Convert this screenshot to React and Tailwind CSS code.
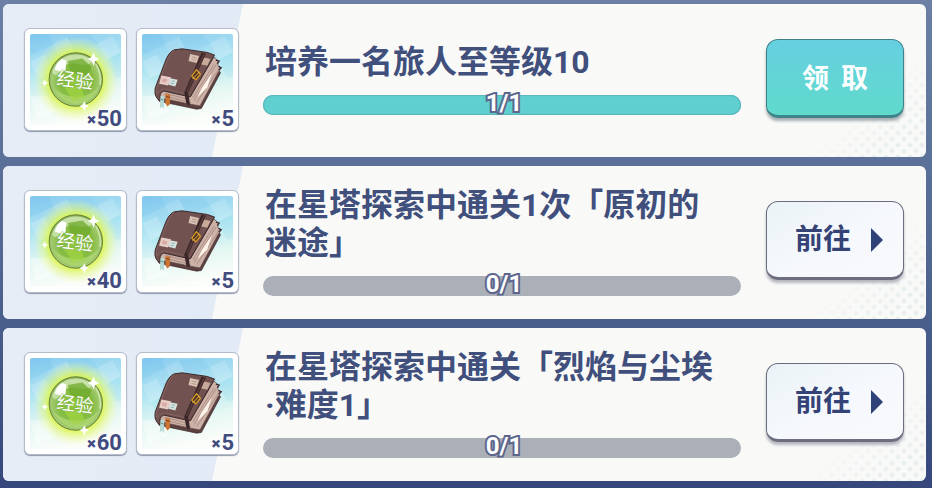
import React from 'react'

const tasks = [
    { id: 1, title: ['培养一名旅人至等级10'], exp: 50, books: 5, done: 1, total: 1 },
    { id: 2, title: ['在星塔探索中通关1次「原初的', '迷途」'], exp: 40, books: 5, done: 0, total: 1 },
    { id: 3, title: ['在星塔探索中通关「烈焰与尘埃', '·难度1」'], exp: 60, books: 5, done: 0, total: 1 },
]

function TileSky({ id, x, y }) {
    return (
        <g>
            <defs>
                <linearGradient id={id} x1="0.1" y1="0" x2="0.3" y2="1">
                    <stop offset="0" stopColor="#8accef" />
                    <stop offset="0.4" stopColor="#b2e6f3" />
                    <stop offset="0.72" stopColor="#e4f7f2" />
                    <stop offset="1" stopColor="#fbfdfa" />
                </linearGradient>
            </defs>
            <g transform={`translate(${x} ${y})`}>
                <rect width="276" height="276" fill={`url(#${id})`} />
                <path d="M0 84 L44 62 L70 112 L26 134Z" fill="#fff" opacity="0.18" />
                <path d="M70 30 L112 8 L140 62 L96 84Z" fill="#fff" opacity="0.12" />
                <path d="M112 8 L180 0 L206 28 L140 62Z" fill="#4fb4e8" opacity="0.1" />
                <path d="M206 28 L250 6 L276 56 L232 78Z" fill="#fff" opacity="0.16" />
                <path d="M0 0 L60 0 L70 30 L0 66Z" fill="#4fb4e8" opacity="0.14" />
                <path d="M26 134 L70 112 L96 164 L52 186Z" fill="#8fe5e5" opacity="0.2" />
                <path d="M232 78 L276 56 L276 130 L258 132Z" fill="#6bcdec" opacity="0.14" />
                <path d="M0 190 L52 186 L80 236 L20 260Z" fill="#fff" opacity="0.4" />
            </g>
        </g>
    )
}

function ExpOrb({ id }) {
    return (
        <svg viewBox="45 42 276 276" className="block size-full" aria-hidden="true">
            <TileSky id={`${id}-sky`} x={45} y={42} />
            <defs>
                <radialGradient id={`${id}-glow`}>
                    <stop offset="0.6" stopColor="#dcf53c" stopOpacity="0.95" />
                    <stop offset="0.74" stopColor="#e2f766" stopOpacity="0.6" />
                    <stop offset="1" stopColor="#effcae" stopOpacity="0" />
                </radialGradient>
                <radialGradient id={`${id}-ball`} cx="0.5" cy="0.52" r="0.52">
                    <stop offset="0" stopColor="#8fc83c" />
                    <stop offset="0.6" stopColor="#84bb42" />
                    <stop offset="0.88" stopColor="#a3cb70" />
                    <stop offset="1" stopColor="#7da556" />
                </radialGradient>
            </defs>
            <circle cx="184" cy="180" r="130" fill={`url(#${id}-glow)`} />
            <circle cx="184" cy="180" r="81" fill={`url(#${id}-ball)`} stroke="#66823f" strokeWidth="3" />
            <path d="M112 158 A76 76 0 0 1 236 124 Q222 142 186 132 Q150 126 134 158 Q122 176 112 158Z" fill="#d7ebbf" opacity="0.7" />
            <path d="M160 124 L204 116 L232 142 L220 166 L168 160Z" fill="#6faa2e" opacity="0.75" />
            <path d="M116 206 Q140 250 184 254 Q232 252 252 204 Q222 234 184 232 Q146 232 116 206Z" fill="#b7dd7c" opacity="0.6" />
            <path d="M150 204 L196 198 L212 232 L176 246Z" fill="#a6d842" opacity="0.6" />
            <path d="M244 132 Q262 160 258 196" fill="none" stroke="#d9efb3" strokeWidth="5" opacity="0.8" />
            <path d="M120 150 Q126 126 142 118 L155 122 L153 152 Q138 160 120 150Z" fill="#fff" />
            <text
                x="182"
                y="202"
                textAnchor="middle"
                transform="rotate(7 182 180)"
                fontSize="56"
                fontWeight="400"
                fill="#fff"
                stroke="#76aa48"
                strokeWidth="2"
                paintOrder="stroke"
            >
                经验
            </text>
            <path d="M238 98 L243 112 L255 118 L243 124 L238 138 L232 124 L220 118 L232 112Z" fill="#fff" />
            <path d="M210 246 L214 256 L224 261 L214 266 L210 277 L205 266 L195 261 L205 256Z" fill="#fff" />
            <path d="M90 180 L93 187 L100 190 L93 194 L90 201 L86 194 L80 190 L86 187Z" fill="#fff" />
        </svg>
    )
}

function Book({ id }) {
    return (
        <svg viewBox="38 42 276 276" className="block size-full" aria-hidden="true">
            <TileSky id={`${id}-sky`} x={38} y={42} />
            {/* back cover */}
            <path d="M258 128 L276 160 L218 268 L204 270 L90 246 L78 222Z" fill="#5b403f" stroke="#3a2829" strokeWidth="2" strokeLinejoin="round" />
            {/* pages */}
            <path d="M256 112 L270 124 L268 138 L278 146 L268 160 L214 260 L180 254 L96 236 L88 218 L104 212 L186 230Z" fill="#cdb2a8" stroke="#5a4140" strokeWidth="2" />
            <path d="M262 136 L196 244 M270 150 L204 250 M256 134 L192 236" stroke="#9c7c74" strokeWidth="2" fill="none" />
            <path d="M250 160 L218 208 L206 234 L236 204Z" fill="#fff4ea" />
            <path d="M108 222 L184 242 M106 230 L186 250" stroke="#9b786c" strokeWidth="2" />
            {/* spine and cover */}
            <path d="M136 90 Q118 96 106 132 L78 206 Q74 232 90 243 L94 240 Q88 222 104 215 L184 233 L258 106 L236 98 L160 87Z" fill="#715250" stroke="#3b2829" strokeWidth="3" strokeLinejoin="round" />
            <path d="M136 92 Q122 100 110 134 L82 206 Q80 216 82 224 Q88 211 106 208 L182 226" fill="none" stroke="#846360" strokeWidth="3" />
            {/* labels */}
            <path d="M184 103 L211 109 L204 130 L179 124Z" fill="#d8c1b2" />
            <path d="M220 112 L246 118 L236 138 L212 133Z" fill="#c8aa9a" />
            <path d="M190 112 L204 115 M188 119 L202 122" stroke="#a08379" strokeWidth="2" />
            <path d="M97 168 L126 173 L117 198 L90 193Z" fill="#e6cdc6" />
            <path d="M101 176 L115 179 L111 190 L98 187Z" fill="#dba9a6" />
            <path d="M123 176 L146 181 L139 201 L118 196Z" fill="#d6e2dd" />
            <path d="M128 184 L138 186 M125 191 L135 193" stroke="#8fb3b3" strokeWidth="3" />
            {/* strap and buckle */}
            <path d="M219 98 L232 102 L178 220 L184 258 L173 255 L166 220Z" fill="#3b2729" />
            <path d="M226 103 L174 217" stroke="#5d3f3b" strokeWidth="4" />
            <path d="M203 150 L215 164 L201 181 L189 170Z" fill="#51311f" stroke="#d79b28" strokeWidth="4" strokeLinejoin="round" />
            <path d="M192 178 L212 157" stroke="#edbd49" strokeWidth="3" />
            {/* page corners */}
            <path d="M262 121 L272 124 L266 132 M270 140 L278 144 L270 151" fill="none" stroke="#3d2c30" strokeWidth="4" />
            {/* bookmarks */}
            <path d="M109 224 L124 226 L122 256 L115 262 L109 252Z" fill="#ce7431" />
            <path d="M111 232 L122 234" stroke="#713b27" strokeWidth="3" />
            <path d="M94 229 L106 231 L104 270 L98 262 L92 268Z" fill="#b8d9d4" />
            <path d="M96 240 L103 242" stroke="#598683" strokeWidth="3" />
        </svg>
    )
}

function RewardTile({ count, children }) {
    return (
        <div className="relative size-[103px] rounded-md border border-[#b4bbc9] bg-white p-[5px] shadow-[0_1px_1px_#8d96aa]">
            <div className="size-full overflow-hidden rounded-xs">{children}</div>
            <span className="absolute right-1 bottom-px flex items-baseline text-[22px] leading-5 font-bold text-[#414b7e] [-webkit-text-stroke:2px_#fdfefe] [paint-order:stroke_fill]">
                <span className="font-['Open_Sans'] text-lg leading-5 font-extrabold">×</span>
                {count}
            </span>
        </div>
    )
}

function ProgressBar({ done, total }) {
    const percent = (done / total) * 100

    return (
        <div
            role="progressbar"
            aria-valuenow={done}
            aria-valuemin={0}
            aria-valuemax={total}
            className="relative h-5 rounded-full bg-[#abb0b8]"
        >
            <div className="h-full rounded-full bg-[#5fcfcf] shadow-[inset_0_0_1px_1px_#58b5b9]" style={{ width: `${percent}%`, visibility: percent ? 'visible' : 'hidden' }}></div>
            <span className="absolute inset-x-0 -top-1 pl-1 text-center text-2xl leading-6 font-bold text-white [-webkit-text-stroke:4px_#5d668c] [paint-order:stroke_fill]">
                {done}/{total}
            </span>
        </div>
    )
}

function ClaimButton() {
    return (
        <button
            type="button"
            className="flex h-[79px] w-[138px] shrink-0 items-center justify-center gap-3 rounded-xl border border-b-3 border-[#3f8289] bg-linear-to-b from-[#66cfe1] to-[#60dacb] pt-1 text-[27px] font-bold text-white shadow-[0_3px_3px_#a5aeb1]"
        >
            <span>领</span>
            <span>取</span>
        </button>
    )
}

function GoButton() {
    return (
        <button
            type="button"
            className="flex h-[79px] w-[138px] shrink-0 items-center justify-center gap-5 rounded-xl border border-b-3 border-[#6d6d80] bg-linear-to-br from-[#eaf3f7] via-[#f5f8fc] to-[#f8f9fd] pl-2 text-[28px] font-bold text-[#344275] shadow-[0_3px_3px_#b4b6bd]"
        >
            前往
            <svg viewBox="0 0 12 24" className="h-6 w-3" aria-hidden="true">
                <path d="M0 0 L12 12 L0 24Z" fill="#2f4179" />
            </svg>
        </button>
    )
}

function TaskCard({ task }) {
    return (
        <section className="relative isolate flex min-h-[153px] items-center overflow-hidden rounded-md bg-[#f9faf8] pr-[22px] pb-1 pl-[21px]">
            {/* slanted panel behind the rewards */}
            <div className="absolute inset-y-0 left-0 -z-10 w-60 bg-linear-to-r from-[#e7edf6] to-[#e2eaf6] [clip-path:polygon(0_0,100%_0,209px_100%,0_100%)]"></div>
            {/* halftone corner */}
            <div className="absolute right-0 bottom-0 -z-10 h-24 w-28 bg-[radial-gradient(#e8edee_20%,transparent_35%),radial-gradient(#e8edee_20%,transparent_35%)] [background-position:0_0,6px_6px] bg-size-[12px_12px] mask-[linear-gradient(to_bottom_right,transparent_45%,black_80%)]"></div>

            <div className="flex shrink-0 gap-[9px] pt-0.5">
                <RewardTile count={task.exp}>
                    <ExpOrb id={`exp-${task.id}`} />
                </RewardTile>
                <RewardTile count={task.books}>
                    <Book id={`book-${task.id}`} />
                </RewardTile>
            </div>

            <div className="mr-[25px] ml-6 flex min-w-0 flex-1 flex-col gap-3.5">
                <h2 className="pl-0.5 text-[32px] leading-[38px] font-bold text-[#414f7c]">
                    {task.title.map((line) => (
                        <span key={line} className="block whitespace-nowrap">{line}</span>
                    ))}
                </h2>
                <ProgressBar done={task.done} total={task.total} />
            </div>

            {task.done >= task.total ? <ClaimButton /> : <GoButton />}
        </section>
    )
}

export default function App() {
    return (
        <main className="flex min-h-screen flex-col gap-[9px] bg-linear-to-b from-[#6b80a4] via-[#536993] to-[#35477b] pt-1 pr-1.5 pb-1 pl-[3px] font-[Roboto,'Noto_Sans_CJK_SC',sans-serif]">
            {tasks.map((task) => (
                <TaskCard key={task.id} task={task} />
            ))}
        </main>
    )
}
